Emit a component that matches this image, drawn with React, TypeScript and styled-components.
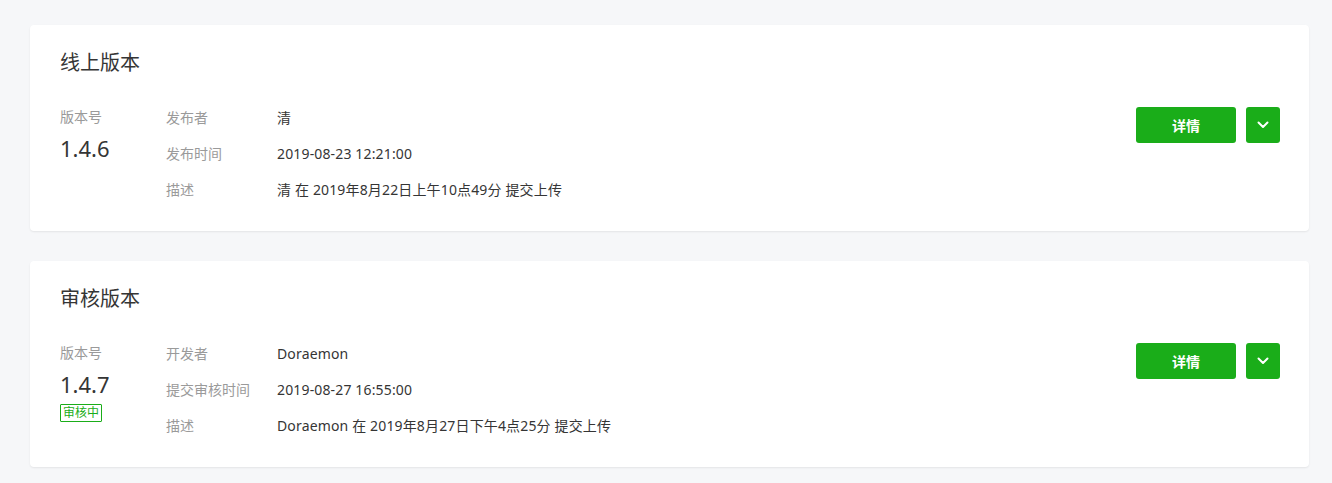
import React from "react";
import styled, { createGlobalStyle } from "styled-components";

const Global = createGlobalStyle`
  html, body { margin: 0; padding: 0; background: #f6f7f9; }
  body { font-family: "Noto Sans", "Noto Sans CJK SC", sans-serif; color: #353535; }
  * { box-sizing: border-box; }
`;

const Page = styled.div`
  padding: 25px 23px 16px 30px;
  display: flex;
  flex-direction: column;
  gap: 30px;
`;

const Card = styled.section`
  background: #fff;
  border-radius: 4px;
  box-shadow: 0 1px 2px rgba(0, 0, 0, 0.08);
  padding: 24px 29px 24px 30px;
`;

const Title = styled.h2`
  margin: 0 0 22px;
  font-size: 20px;
  line-height: 28px;
  font-weight: 400;
  color: #353535;
`;

const Body = styled.div`
  display: flex;
  align-items: flex-start;
`;

const VersionCol = styled.div`
  width: 106px;
  display: flex;
  flex-direction: column;
  align-items: flex-start;
`;

const Label = styled.div`
  font-size: 14px;
  line-height: 36px;
  color: #9a9a9a;
`;

const VersionNum = styled.div`
  font-size: 22px;
  line-height: 26px;
  color: #353535;
`;

const Badge = styled.span`
  margin-top: 7px;
  display: inline-block;
  border: 1px solid #1aad19;
  color: #1aad19;
  font-size: 12px;
  line-height: 16px;
  padding: 0 2px;
  border-radius: 1px;
`;

const Info = styled.dl`
  flex: 1;
  margin: 0;
  display: grid;
  grid-template-columns: 111px 1fr;
  grid-auto-rows: 36px;
  align-items: center;
  font-size: 14px;
`;

const Dt = styled.dt`
  color: #9a9a9a;
`;

const Dd = styled.dd`
  margin: 0;
  color: #353535;
  letter-spacing: 0.15px;
`;

const Actions = styled.div`
  margin-top: 8px;
  display: flex;
  gap: 10px;
`;

const Button = styled.button<{ $square?: boolean }>`
  height: 36px;
  width: ${(p) => (p.$square ? "34px" : "100px")};
  border: none;
  border-radius: 3px;
  background: #1aad19;
  color: #fff;
  font-family: inherit;
  font-size: 14px;
  font-weight: 600;
  display: flex;
  align-items: center;
  justify-content: center;
  padding: 0;
  cursor: pointer;
`;

const Chevron = () => (
  <svg width="12" height="8" viewBox="0 0 12 8" fill="none">
    <path d="M1.5 1.5 L6 6 L10.5 1.5" stroke="#fff" strokeWidth="2" strokeLinecap="round" strokeLinejoin="round" />
  </svg>
);

type Row = [string, string];

const VersionCard = ({
  title,
  version,
  badge,
  rows,
}: {
  title: string;
  version: string;
  badge?: string;
  rows: Row[];
}) => (
  <Card>
    <Title>{title}</Title>
    <Body>
      <VersionCol>
        <Label>版本号</Label>
        <VersionNum>{version}</VersionNum>
        {badge && <Badge>{badge}</Badge>}
      </VersionCol>
      <Info>
        {rows.map(([k, v]) => (
          <React.Fragment key={k}>
            <Dt>{k}</Dt>
            <Dd>{v}</Dd>
          </React.Fragment>
        ))}
      </Info>
      <Actions>
        <Button>详情</Button>
        <Button $square>
          <Chevron />
        </Button>
      </Actions>
    </Body>
  </Card>
);

export default function App() {
  return (
    <>
      <Global />
      <Page>
        <VersionCard
          title="线上版本"
          version="1.4.6"
          rows={[
            ["发布者", "清"],
            ["发布时间", "2019-08-23 12:21:00"],
            ["描述", "清 在 2019年8月22日上午10点49分 提交上传"],
          ]}
        />
        <VersionCard
          title="审核版本"
          version="1.4.7"
          badge="审核中"
          rows={[
            ["开发者", "Doraemon"],
            ["提交审核时间", "2019-08-27 16:55:00"],
            ["描述", "Doraemon 在 2019年8月27日下午4点25分 提交上传"],
          ]}
        />
      </Page>
    </>
  );
}
